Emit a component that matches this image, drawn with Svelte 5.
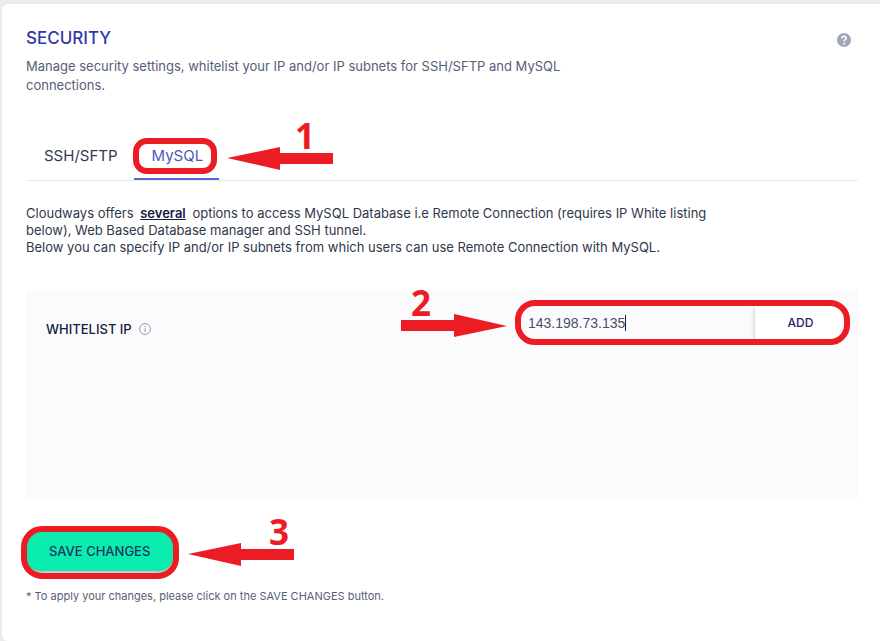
<script lang="ts">
	let tab = $state('mysql');
	let ip = $state('143.198.73.135');

	function add(e: SubmitEvent) {
		e.preventDefault();
	}
</script>

{#snippet arrow(step: string, x: number, right: boolean)}
	<svg class="arrow" width="106" height="64" viewBox="0 -12 106 64" aria-hidden="true">
		{#if right}
			<path d="M0 35H53V29L106 41L53 52V46H0Z" />
		{:else}
			<path d="M0 40L53 29V35H106V46H53V52Z" />
		{/if}
		<text {x} y="31" text-anchor="middle">{step}</text>
	</svg>
{/snippet}

<main class="card">
	<header>
		<div class="intro">
			<h1>SECURITY</h1>
			<p>
				Manage security settings, whitelist your IP and/or IP subnets for SSH/SFTP and MySQL
				connections.
			</p>
		</div>
		<button class="help" aria-label="Help">
			<svg width="14" height="14" viewBox="0 0 14 14">
				<circle cx="7" cy="7" r="7" fill="#a0a5b8" />
				<path d="M4.9 5.4C4.9 2.6 9.2 2.7 9.2 5.2C9.2 6.7 7 6.7 7 8.5" fill="none" stroke="#fff" stroke-width="1.6" />
				<circle cx="7" cy="10.8" r="1" fill="#fff" />
			</svg>
		</button>
	</header>

	<nav>
		<button class="tab" class:active={tab == 'ssh'} onclick={() => (tab = 'ssh')}>SSH/SFTP</button>
		<div class="marked">
			<button class="tab" class:active={tab == 'mysql'} onclick={() => (tab = 'mysql')}>MySQL</button>
			<span class="ring ring-tab"></span>
			<div class="callout one">{@render arrow('1', 78, false)}</div>
		</div>
	</nav>

	<p class="description">
		Cloudways offers <a href="#several">several</a> options to access MySQL Database i.e Remote Connection
		(requires IP White listing below), Web Based Database manager and SSH tunnel.<br />
		Below you can specify IP and/or IP subnets from which users can use Remote Connection with MySQL.
	</p>

	<section class="panel">
		<label for="ip">
			WHITELIST IP
			<svg width="12" height="12" viewBox="0 0 12 12" fill="none" stroke="#9499ad">
				<circle cx="6" cy="6" r="5.4" />
				<path d="M6 5.2V9M6 3V4.2" />
			</svg>
		</label>
		<form class="marked" onsubmit={add}>
			<div class="field">
				<input id="ip" type="text" size="1" bind:value={ip} />
				<span class="caret"></span>
			</div>
			<button class="add">ADD</button>
			<span class="ring ring-form"></span>
			<div class="callout two">{@render arrow('2', 20, true)}</div>
		</form>
	</section>

	<div class="marked save-row">
		<button class="save">SAVE CHANGES</button>
		<span class="ring ring-save"></span>
		<div class="callout three">{@render arrow('3', 91, false)}</div>
	</div>
	<p class="note">* To apply your changes, please click on the SAVE CHANGES button.</p>
</main>

<style>
	:global(body) {
		background: #ececec;
		font-family: 'Inter', sans-serif;
	}
	.card {
		box-sizing: border-box;
		min-height: calc(100vh - 4px);
		margin: 4px 0 0 2px;
		padding: 22px 22px 24px 24px;
		background: #fff;
		border-radius: 6px 0 0 6px;
	}
	h1,
	p {
		margin: 0;
	}
	button {
		border: none;
		padding: 0;
		background: none;
		font-family: inherit;
		cursor: pointer;
	}
	header {
		display: flex;
		justify-content: space-between;
	}
	.intro {
		max-width: 560px;
	}
	h1 {
		color: #3338a8;
		font-size: 17px;
		font-weight: 500;
		line-height: 24px;
	}
	header p {
		margin-top: 7px;
		color: #565e78;
		font-size: 13px;
		line-height: 19px;
	}
	.help {
		align-self: flex-start;
		margin: 7px 7px 0 0;
		height: 14px;
	}
	.help svg {
		display: block;
	}
	nav {
		display: flex;
		margin-top: 35px;
		border-bottom: 1px solid #e9e9ee;
	}
	.tab {
		height: 50px;
		padding: 2px 16px 0 18px;
		border-bottom: 2px solid transparent;
		color: #323a52;
		font-size: 15px;
	}
	.tab.active {
		border-color: #5664e0;
		color: #4c58bd;
	}
	.marked {
		position: relative;
	}
	.ring {
		position: absolute;
		border: 6px solid #ec1c24;
		pointer-events: none;
	}
	.ring-tab {
		inset: 8px 2px 6px -1px;
		border-radius: 14px;
	}
	.ring-form {
		inset: -6px -4px -6px -6px;
		border-radius: 20px;
	}
	.ring-save {
		inset: -5px -6px -8px -5px;
		border-radius: 21px;
	}
	.callout {
		position: absolute;
		pointer-events: none;
	}
	.one {
		left: calc(100% + 8px);
		top: -24px;
	}
	.two {
		right: calc(100% + 14px);
		top: -33px;
	}
	.three {
		left: calc(100% + 15px);
		top: -29px;
	}
	.arrow {
		display: block;
		overflow: visible;
		fill: #ec1c24;
		font-family: 'Open Sans', sans-serif;
		font-size: 35px;
		font-weight: 700;
	}
	.description {
		max-width: 700px;
		margin-top: 24px;
		color: #30384c;
		font-size: 13px;
		line-height: 17px;
	}
	.description a {
		margin: 0 3px;
		color: #14203c;
		font-weight: 600;
	}
	.panel {
		display: flex;
		align-items: flex-start;
		justify-content: space-between;
		box-sizing: border-box;
		min-height: 208px;
		margin-top: 34px;
		padding: 16px 12px 16px 20px;
		background: #fbfbfe;
	}
	label {
		display: flex;
		align-items: center;
		gap: 7px;
		margin-top: 14px;
		color: #14203c;
		font-size: 13px;
		font-weight: 500;
		line-height: 18px;
	}
	form {
		display: flex;
		width: 325px;
		height: 33px;
	}
	.field {
		display: flex;
		flex: 1;
		align-items: center;
		padding-left: 7px;
	}
	input {
		field-sizing: content;
		border: none;
		outline: none;
		padding: 0;
		background: none;
		color: #4a5068;
		font-family: 'Liberation Sans', sans-serif;
		font-size: 14px;
	}
	.caret {
		width: 1px;
		height: 16px;
		background: #14203c;
	}
	.add {
		width: 91px;
		border-radius: 0 14px 14px 0;
		background: #fff;
		box-shadow: 0 2px 5px #00000040;
		color: #2a2566;
		font-size: 12px;
		font-weight: 500;
	}
	.save-row {
		width: fit-content;
		margin-top: 33px;
	}
	.save {
		display: block;
		height: 40px;
		padding: 0 23px;
		border-radius: 14px;
		background: #0becb0;
		box-shadow: 0 2px 2px #00000040;
		color: #17365c;
		font-size: 13px;
		font-weight: 500;
	}
	.note {
		margin-top: 16px;
		color: #565e78;
		font-size: 11px;
		line-height: 18px;
	}
</style>
